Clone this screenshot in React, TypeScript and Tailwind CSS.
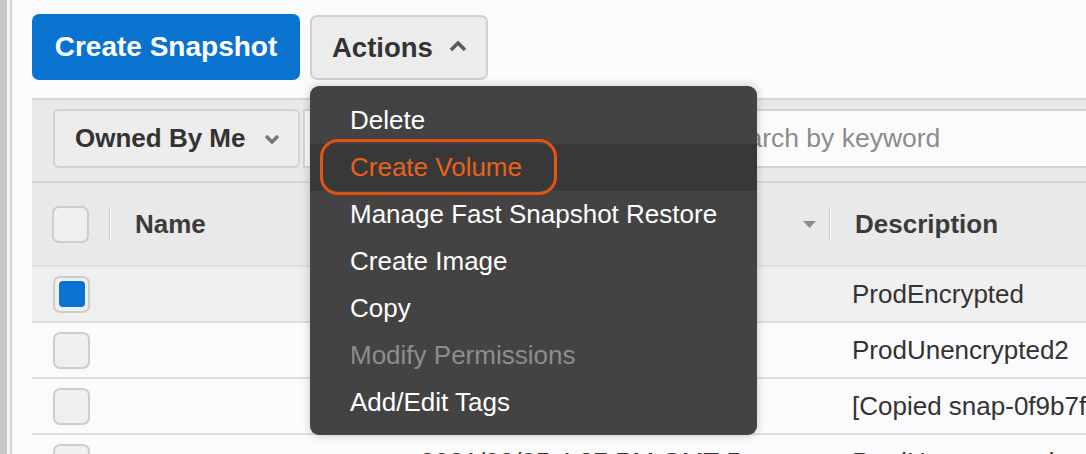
import { useState } from 'react';

type Row = { when: string; description: string; selected?: boolean };

const rows: Row[] = [
  { when: '2021/03/08 9:14 AM GMT-5', description: 'ProdEncrypted', selected: true },
  { when: '2021/03/08 9:02 AM GMT-5', description: 'ProdUnencrypted2' },
  { when: '2021/03/05 4:51 PM GMT-5', description: '[Copied snap-0f9b7f3a6c21e04d7 from us-east-1]' },
  { when: '2021/03/05 4:37 PM GMT-5', description: 'ProdUnencrypted' },
];

const menuItems = [
  { label: 'Delete' },
  { label: 'Create Volume', active: true },
  { label: 'Manage Fast Snapshot Restore' },
  { label: 'Create Image' },
  { label: 'Copy' },
  { label: 'Modify Permissions', disabled: true },
  { label: 'Add/Edit Tags' },
];

function Checkbox({ checked }: { checked?: boolean }) {
  return (
    <div className="flex h-[37px] w-[37px] shrink-0 items-center justify-center rounded-[7px] border-2 border-[#cdcdcd] bg-[#efefef]">
      {checked && <div className="h-[26px] w-[26px] rounded-[4px] bg-[#0972d3]" />}
    </div>
  );
}

function ActionsMenu() {
  return (
    <div className="absolute left-0 top-[71px] z-20 w-[447px] rounded-[9px] bg-[#434343] pb-[9px] pt-[11px] shadow-[0_0_10px_rgba(0,0,0,0.22)]">
      {/* highlight ring round the hovered item */}
      <div className="pointer-events-none absolute left-[10px] top-[53px] h-[56px] w-[237px] rounded-[18px] border-[3px] border-[#e2540f]" />
      {menuItems.map((item) => (
        <div
          key={item.label}
          className={
            'flex h-[47px] items-center pl-[40px] text-[26px] ' +
            (item.active ? 'bg-[#383838] text-[#e8621c]' : item.disabled ? 'text-[#8d8d8d]' : 'text-white')
          }
        >
          {item.label}
        </div>
      ))}
    </div>
  );
}

export default function App() {
  const [open] = useState(true);

  return (
    <div className="flex h-[454px] w-[1086px] overflow-hidden bg-[#fbfbfd] font-['Liberation_Sans',Arial,sans-serif] text-[#333]">
      {/* left frame edge */}
      <div className="w-[7px] shrink-0 bg-[#c6c6c6]" />
      <div className="w-[3px] shrink-0 bg-[#f2f2f2]" />
      <div className="w-[2px] shrink-0 bg-[#d2d2d2]" />

      <main className="flex min-w-0 flex-1 flex-col pl-[20px] pt-[14px]">
        {/* buttons */}
        <div className="flex shrink-0 items-start gap-[10px]">
          <button
            type="button"
            className="flex h-[66px] w-[268px] items-center justify-center rounded-[7px] bg-[#0a73cf] text-[28px] font-bold text-white"
          >
            Create Snapshot
          </button>
          <div className="relative mt-px">
            <button
              type="button"
              className="flex h-[65px] w-[178px] items-center gap-[16px] rounded-[7px] border-2 border-[#d0d0d0] bg-[#ececec] pl-[20px] text-[27.5px] font-bold text-[#333]"
            >
              Actions
              <svg width="18" height="12" viewBox="0 0 18 12" className="mt-[-4px]">
                <path d="M2 10 L9 3 L16 10" fill="none" stroke="#5a5a5a" strokeWidth="3.5" />
              </svg>
            </button>
            {open && <ActionsMenu />}
          </div>
        </div>

        {/* filter bar */}
        <div className="mt-[18px] flex h-[85px] shrink-0 items-start gap-[3px] border-y-2 border-[#d6d6d6] bg-[#e9e9e9] pl-[21px] pt-[9px]">
          <div className="flex h-[59px] w-[247px] shrink-0 items-center justify-between rounded-[6px] border-2 border-[#d3d3d3] bg-[#ededed] pl-[20px] pr-[18px]">
            <span className="text-[26px] font-bold text-[#333]">Owned By Me</span>
            <svg width="16" height="10" viewBox="0 0 16 10">
              <path d="M2 2 L8 8 L14 2" fill="none" stroke="#777" strokeWidth="3.5" />
            </svg>
          </div>
          <div className="flex h-[59px] flex-1 items-center border-2 border-r-0 border-[#d3d3d3] bg-[#fbfbfd] pl-[410px] text-[26.5px] text-[#8b8b8b]">
            Search by keyword
          </div>
        </div>

        {/* table header */}
        <div className="grid h-[82px] shrink-0 grid-cols-[79px_289px_431px_1fr] items-center bg-[#e9e9e9]">
          <div className="flex items-center justify-end">
            <Checkbox />
            <div className="ml-[20px] h-[36px] w-[2px] border-l border-[#cfcfcf] bg-[#f7f7f7]" />
          </div>
          <div className="pl-[24px] text-[26px] font-bold text-[#3b3b3b]">Name</div>
          <div className="flex items-center justify-end">
            <svg width="13" height="7" viewBox="0 0 13 7" className="mr-[13px]">
              <path d="M0 0 H13 L6.5 7 Z" fill="#8c8c8c" />
            </svg>
            <div className="h-[36px] w-[2px] border-l border-[#cfcfcf] bg-[#f7f7f7]" />
          </div>
          <div className="pl-[24px] text-[26px] font-bold text-[#3b3b3b]">Description</div>
        </div>

        {/* table rows */}
        {rows.map((row, i) => (
          <div
            key={i}
            className={
              'grid h-[56px] shrink-0 grid-cols-[79px_289px_431px_1fr] items-center border-t-2 border-[#dedede] first:border-t-0 ' +
              (row.selected ? 'bg-[#efefef]' : 'bg-[#fbfbfd]')
            }
          >
            <div className="pl-[21px]">
              <Checkbox checked={row.selected} />
            </div>
            <div />
            <div className="truncate pl-[20px] text-[26px] text-[#333]">{row.when}</div>
            <div className="whitespace-nowrap pl-[21px] text-[26px] text-[#333]">{row.description}</div>
          </div>
        ))}
      </main>
    </div>
  );
}
